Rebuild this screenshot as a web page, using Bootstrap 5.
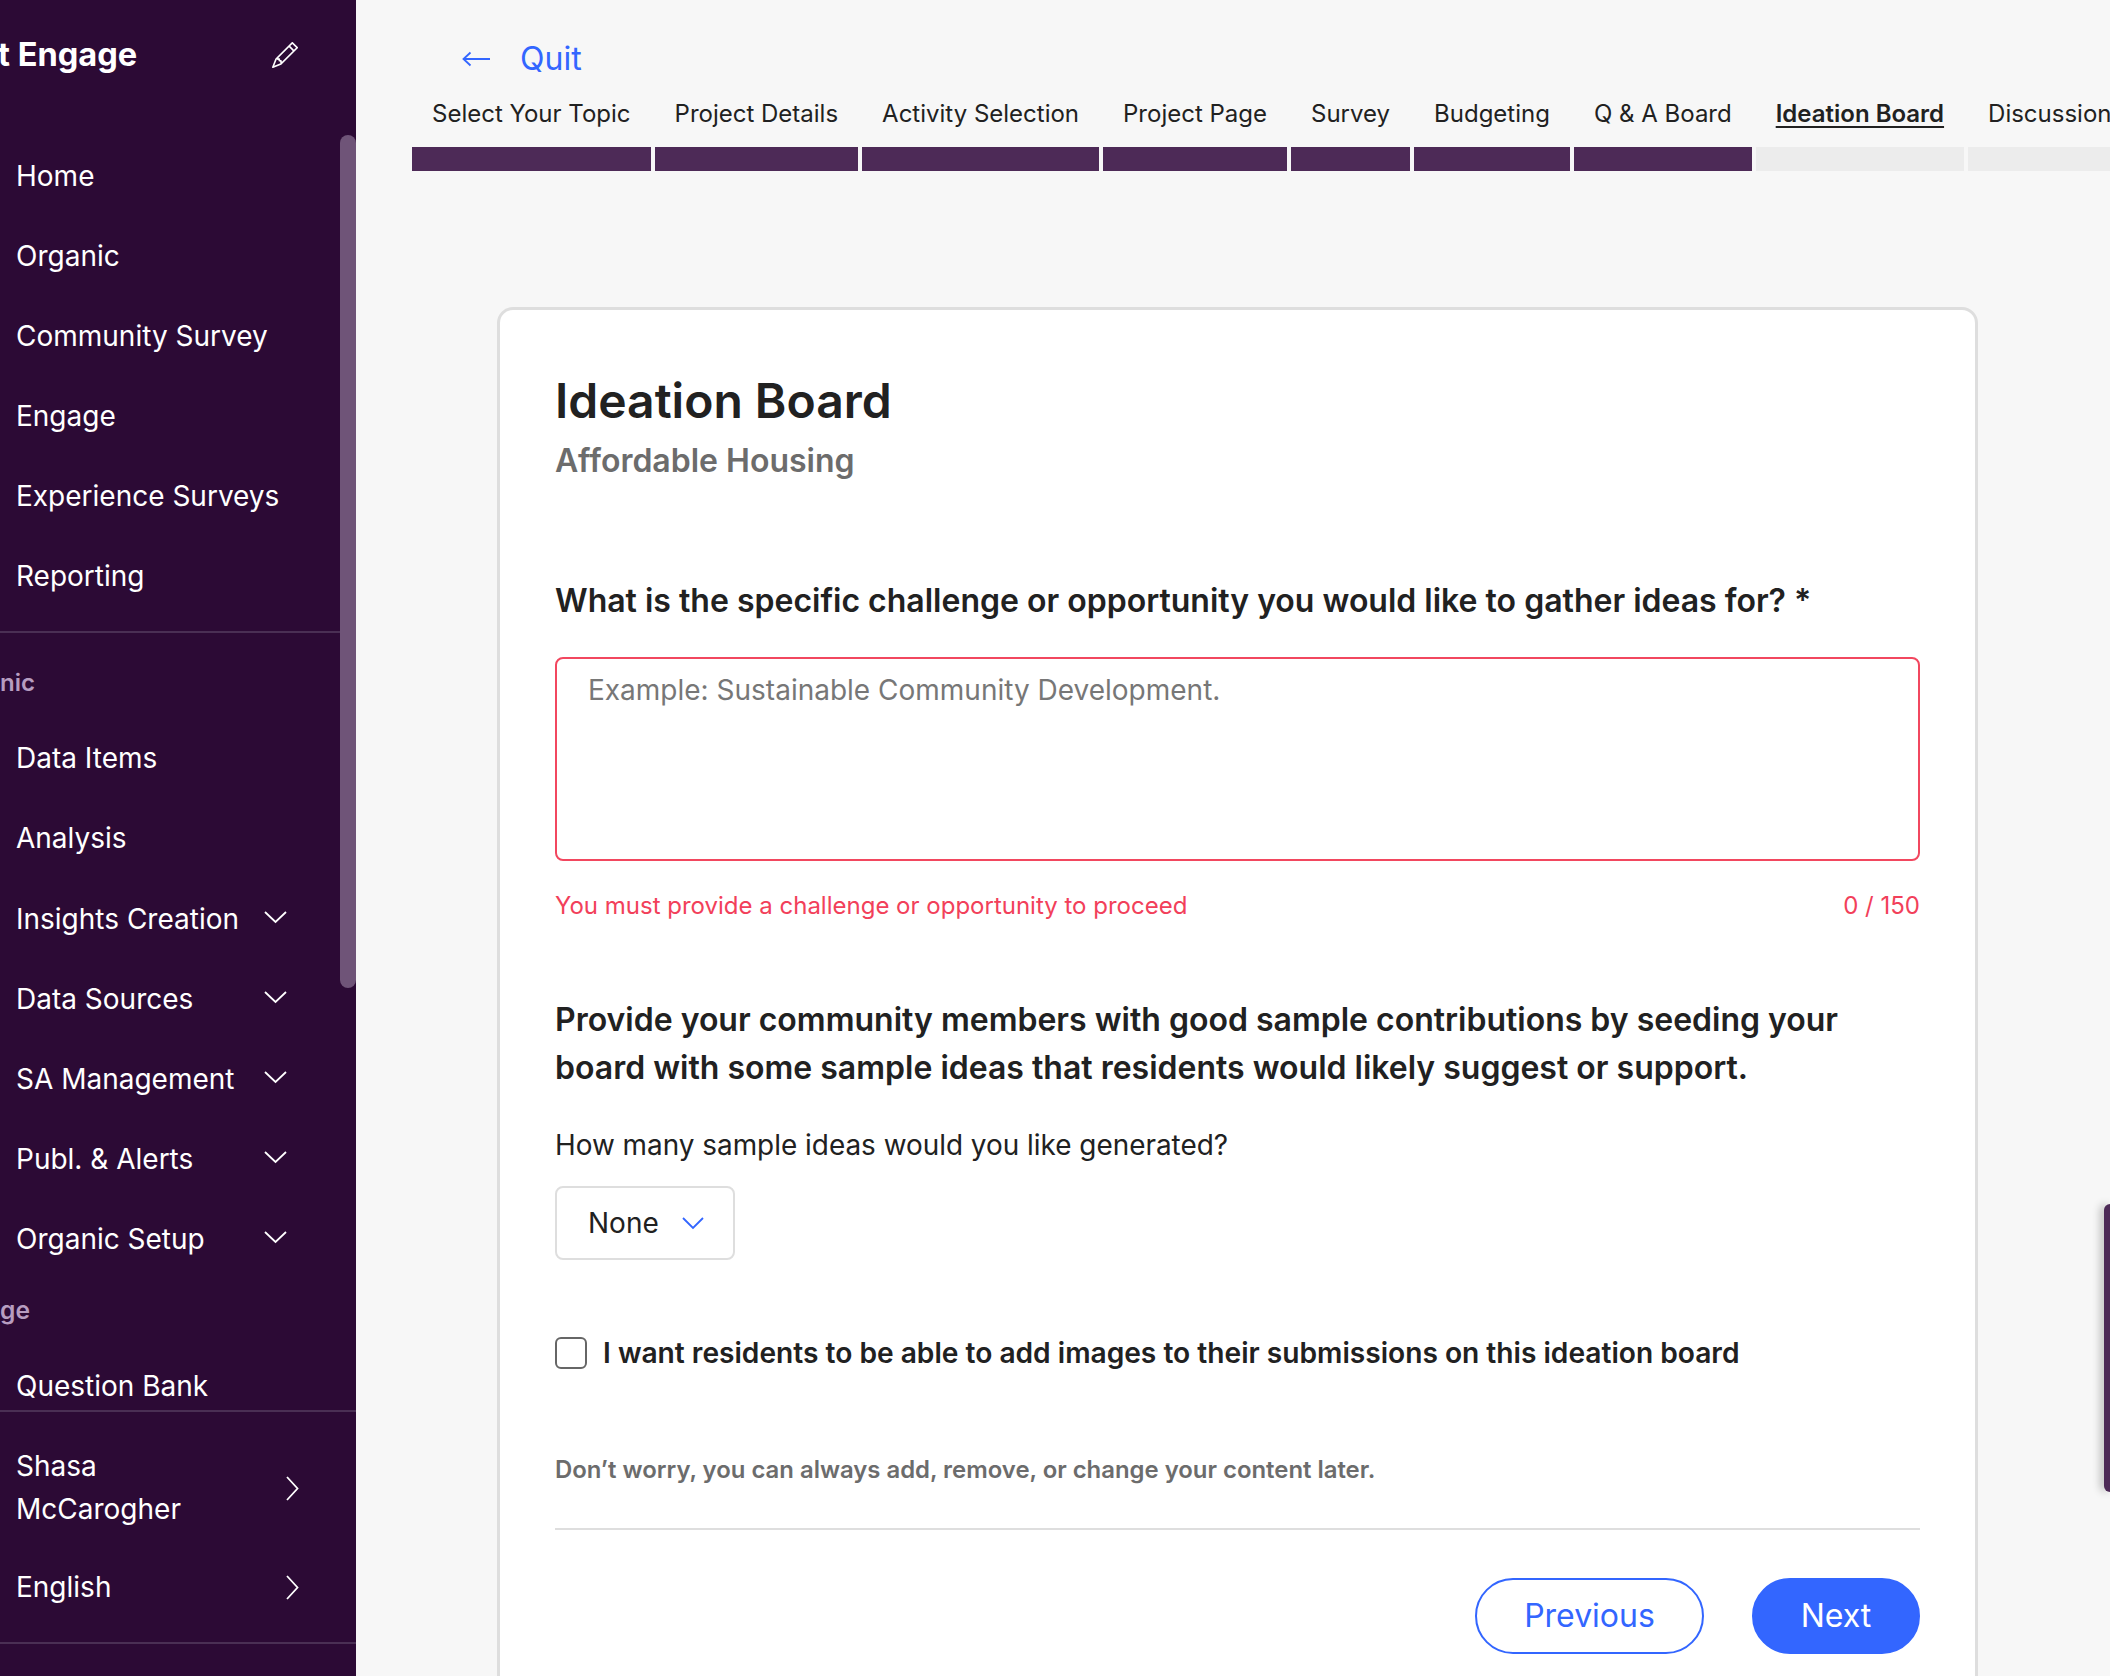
<!DOCTYPE html>
<html lang="en">
<head>
<meta charset="utf-8">
<title>Ideation Board</title>
<link href="https://cdn.jsdelivr.net/npm/bootstrap@5.3.0/dist/css/bootstrap.min.css" rel="stylesheet">
<style>
html,body{height:100%;}
body{font-family:Inter,"Liberation Sans",sans-serif;background:#f7f7f7;color:#212121;overflow:hidden;height:1676px;}
.shell{height:1676px;}
.side{width:356px;flex:0 0 356px;background:#2c0a35;color:#fff;position:relative;height:1676px;overflow:hidden;}
.side-head{height:136px;padding:0 58px 0 0;}
.side-title{font-size:32.6px;font-weight:700;line-height:109px;margin-left:-2px;white-space:nowrap;}
.pencil{width:26px;height:26px;margin-top:-26px;}
.side-scroll{height:1274px;overflow:hidden;}
.side-item{height:80px;padding:0 68px 0 16px;font-size:28px;line-height:34px;color:#fff;}
.side-more{padding:2px 69px 0 16px;}
.side-rule{height:2px;background:#4a2f54;margin:15px 16px 0 0;}
.sect-a{font-size:24px;font-weight:600;color:#b79dc0;line-height:30px;padding-top:35px;height:85px;}
.sect-b{font-size:24.6px;font-weight:600;color:#b79dc0;line-height:30px;padding-top:17px;height:68px;}
.chev{width:23px;height:16px;margin-top:-5px;}
.side-foot{border-top:2px solid #4a2f54;}
.foot-name{padding:33px 57px 0 16px;height:135px;font-size:28px;line-height:43px;width:100%;}
.foot-lang{padding:0 57px 0 16px;height:80px;font-size:28px;}
.chev-r{width:13px;height:25px;flex:none;}
.foot-rule{height:2px;background:#4a2f54;margin-top:15px;}
.thumb{position:absolute;right:0;top:135px;width:16px;height:853px;background:#6f5478;border-radius:8px;}
.main-area{min-width:0;flex:1 1 auto;overflow:hidden;height:1676px;}
.quit-row{height:72px;padding:0 0 0 106px;margin-top:23px;color:#3366ff;font-size:32px;gap:30px;}
.steps{margin:-3px 0 0 56px;width:max-content;gap:4px;}
.step{padding:0;}
.step-label{padding:0 20px;font-size:24px;line-height:43px;height:55px;white-space:nowrap;color:#212121;}
.step-bar{height:24px;background:#4d2a57;}
.step-off .step-bar{background:#ececec;}
.step-now .step-label span{font-weight:600;text-decoration:underline;text-underline-offset:4px;}
.panel{margin:136px 0 0 141px;width:1481px;height:1500px;border:3px solid #dedede;border-radius:16px;background:#fff;}
.panel .card-body{padding:62px 55px 40px;}
.panel-title{font-size:48px;font-weight:600;line-height:58px;margin:0;color:#212121;}
.panel-sub{font-size:32px;font-weight:600;line-height:40px;color:#6c6c6c;margin:11px 0 0;}
.ask{font-size:32px;font-weight:600;line-height:48px;margin:0;color:#212121;}
.ask-one{margin-top:96px;}
.ask-two{margin-top:75px;}
.entry{margin-top:32px;height:204px;border:2.5px solid #f2475f;border-radius:8px;font-size:28px;padding:14px 31px;line-height:34px;resize:none;color:#212121;}
.entry::placeholder{color:#777;}
.entry:focus{border-color:#f2475f;box-shadow:none;}
.err{color:#f2405a;font-size:24px;line-height:30px;margin-top:30px;}
.howmany{font-size:27.9px;line-height:34px;margin:36px 0 0;}
.pick{margin-top:24px;width:180px;height:74px;border:2.5px solid #dedede;border-radius:8px;background:#fff;font-size:28px;color:#212121;padding:0 0 0 31px;gap:23px;}
.pick svg{width:22px;height:14px;}
.check-row{margin-top:76px;padding:0;gap:16px;min-height:0;}
.check-row .form-check-input{width:32px;height:32px;margin:0;float:none;flex:none;border:2px solid #666;border-radius:6px;}
.check-row .form-check-label{font-size:28.15px;font-weight:600;line-height:34px;color:#212121;}
.hint{font-size:23.9px;font-weight:600;line-height:30px;color:#6c6c6c;margin:85px 0 0;}
.panel-rule{margin:43px 0 0;border:0;border-top:2.5px solid #dedede;opacity:1;}
.acts{margin-top:48px;gap:48px;}
.acts .btn{height:76px;font-size:32px;border-radius:38px;padding:0;line-height:1;}
.btn-prev{width:229px;border:2px solid #3366ff;color:#3366ff;background:#fff;}
.btn-next{width:168px;border:2px solid #3366ff;color:#fff;background:#3366ff;}
.tab-edge{position:absolute;right:0;top:1204px;width:6px;height:288px;background:#4d2a57;border-radius:8px 0 0 8px;box-shadow:-3px 0 8px rgba(0,0,0,.3);}
</style>
</head>
<body>
<div class="shell d-flex">
  <aside class="side d-flex flex-column">
    <div class="side-head d-flex justify-content-between align-items-start">
      <div class="side-title">t Engage</div>
      <svg class="pencil align-self-center" viewBox="0 0 16 16" fill="#fff"><path d="M12.146.146a.5.5 0 0 1 .708 0l3 3a.5.5 0 0 1 0 .708l-10 10a.5.5 0 0 1-.168.11l-5 2a.5.5 0 0 1-.65-.65l2-5a.5.5 0 0 1 .11-.168l10-10zM11.207 2.5 13.5 4.793 14.793 3.5 12.5 1.207 11.207 2.5zm1.586 3L10.5 3.207 4 9.707V10h.5a.5.5 0 0 1 .5.5v.5h.5a.5.5 0 0 1 .5.5v.5h.293l6.5-6.5zm-9.761 5.175-.106.106-1.528 3.821 3.821-1.528.106-.106A.5.5 0 0 1 5 12.5V12h-.5a.5.5 0 0 1-.5-.5V11h-.5a.5.5 0 0 1-.468-.325z"/></svg>
    </div>
    <div class="side-scroll">
      <div class="side-item d-flex align-items-center">Home</div>
      <div class="side-item d-flex align-items-center">Organic</div>
      <div class="side-item d-flex align-items-center">Community Survey</div>
      <div class="side-item d-flex align-items-center">Engage</div>
      <div class="side-item d-flex align-items-center">Experience Surveys</div>
      <div class="side-item d-flex align-items-center">Reporting</div>
      <div class="side-rule"></div>
      <div class="sect-a">nic</div>
      <div class="side-item d-flex align-items-center">Data Items</div>
      <div class="side-item d-flex align-items-center">Analysis</div>
      <div class="side-item side-more d-flex align-items-center justify-content-between text-nowrap">Insights Creation<svg class="chev" viewBox="0 0 23 16" fill="none" stroke="#fff" stroke-width="1.8"><path d="M1 3l10.5 10L22 3"/></svg></div>
      <div class="side-item side-more d-flex align-items-center justify-content-between text-nowrap">Data Sources<svg class="chev" viewBox="0 0 23 16" fill="none" stroke="#fff" stroke-width="1.8"><path d="M1 3l10.5 10L22 3"/></svg></div>
      <div class="side-item side-more d-flex align-items-center justify-content-between text-nowrap">SA Management<svg class="chev" viewBox="0 0 23 16" fill="none" stroke="#fff" stroke-width="1.8"><path d="M1 3l10.5 10L22 3"/></svg></div>
      <div class="side-item side-more d-flex align-items-center justify-content-between text-nowrap">Publ. &amp; Alerts<svg class="chev" viewBox="0 0 23 16" fill="none" stroke="#fff" stroke-width="1.8"><path d="M1 3l10.5 10L22 3"/></svg></div>
      <div class="side-item side-more d-flex align-items-center justify-content-between text-nowrap">Organic Setup<svg class="chev" viewBox="0 0 23 16" fill="none" stroke="#fff" stroke-width="1.8"><path d="M1 3l10.5 10L22 3"/></svg></div>
      <div class="sect-b">ge</div>
      <div class="side-item d-flex align-items-center">Question Bank</div>
    </div>
    <div class="side-foot">
      <div class="foot-name d-flex justify-content-between align-items-start"><span>Shasa<br>McCarogher</span><svg class="chev-r align-self-center mb-3" viewBox="0 0 13 25" fill="none" stroke="#fff" stroke-width="1.8"><path d="M1 1l10.500 11.500L1 24"/></svg></div>
      <div class="foot-lang d-flex justify-content-between align-items-center"><span>English</span><svg class="chev-r" viewBox="0 0 13 25" fill="none" stroke="#fff" stroke-width="1.8"><path d="M1 1l10.500 11.500L1 24"/></svg></div>
      <div class="foot-rule"></div>
    </div>
    <div class="thumb"></div>
  </aside>
  <main class="main-area">
    <div class="quit-row d-flex align-items-center">
      <svg width="28" height="16" viewBox="0 0 28 16" fill="none" stroke="#3366ff" stroke-width="1.8"><path d="M28 8H2M8.500 1.500L1.500 8l7 6.500"/></svg>
      <span>Quit</span>
    </div>
    <div class="steps d-flex flex-nowrap">
      <div class="step"><div class="step-label"><span>Select Your Topic</span></div><div class="step-bar"></div></div>
      <div class="step"><div class="step-label"><span>Project Details</span></div><div class="step-bar"></div></div>
      <div class="step"><div class="step-label"><span>Activity Selection</span></div><div class="step-bar"></div></div>
      <div class="step"><div class="step-label"><span>Project Page</span></div><div class="step-bar"></div></div>
      <div class="step"><div class="step-label"><span>Survey</span></div><div class="step-bar"></div></div>
      <div class="step"><div class="step-label"><span>Budgeting</span></div><div class="step-bar"></div></div>
      <div class="step"><div class="step-label"><span>Q &amp; A Board</span></div><div class="step-bar"></div></div>
      <div class="step step-off step-now"><div class="step-label"><span>Ideation Board</span></div><div class="step-bar"></div></div>
      <div class="step step-off"><div class="step-label"><span>Discussion</span></div><div class="step-bar"></div></div>
    </div>
    <div class="card panel">
      <div class="card-body">
        <h1 class="panel-title">Ideation Board</h1>
        <p class="panel-sub">Affordable Housing</p>
        <p class="ask ask-one">What is the specific challenge or opportunity you would like to gather ideas for? *</p>
        <textarea class="form-control entry" placeholder="Example: Sustainable Community Development."></textarea>
        <div class="err d-flex justify-content-between"><span>You must provide a challenge or opportunity to proceed</span><span>0 / 150</span></div>
        <p class="ask ask-two">Provide your community members with good sample contributions by seeding your board with some sample ideas that residents would likely suggest or support.</p>
        <p class="howmany">How many sample ideas would you like generated?</p>
        <button type="button" class="btn pick d-flex align-items-center"><span>None</span><svg viewBox="0 0 22 14" fill="none" stroke="#3366ff" stroke-width="1.8"><path d="M1 2l10 10L21 2"/></svg></button>
        <div class="form-check check-row d-flex align-items-center">
          <input class="form-check-input" type="checkbox" id="imgs">
          <label class="form-check-label" for="imgs">I want residents to be able to add images to their submissions on this ideation board</label>
        </div>
        <p class="hint">Don’t worry, you can always add, remove, or change your content later.</p>
        <hr class="panel-rule">
        <div class="acts d-flex justify-content-end">
          <button type="button" class="btn btn-prev">Previous</button>
          <button type="button" class="btn btn-next">Next</button>
        </div>
      </div>
    </div>
  </main>
</div>
<div class="tab-edge"></div>
<script src="https://cdn.jsdelivr.net/npm/bootstrap@5.3.0/dist/js/bootstrap.bundle.min.js"></script>
</body>
</html>
